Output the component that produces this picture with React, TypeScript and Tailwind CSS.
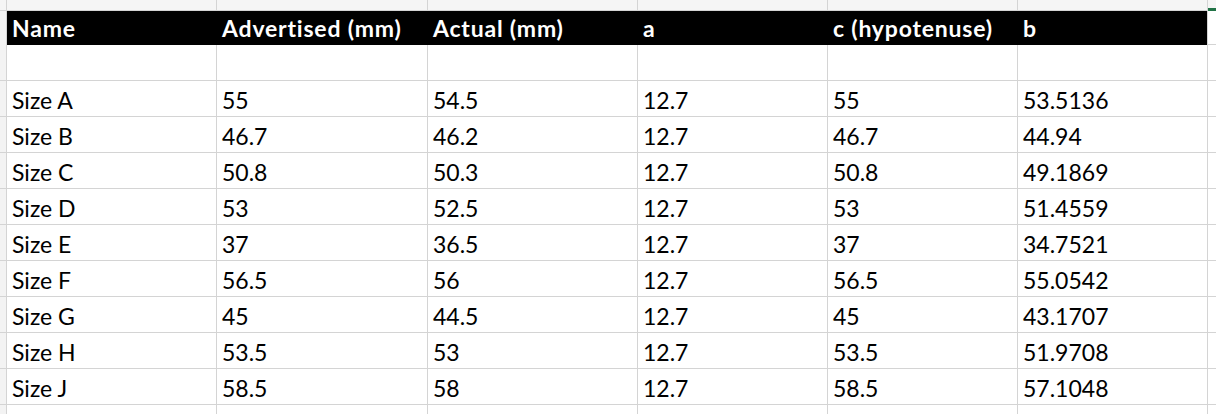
const cols = ["w-[7px]", "w-[210px]", "w-[211px]", "w-[210px]", "w-[190px]", "w-[190px]", "w-[190px]", "flex-1"];

const headers = ["Name", "Advertised (mm)", "Actual (mm)", "a", "c (hypotenuse)", "b"];

const rows = [
  ["Size A", "55", "54.5", "12.7", "55", "53.5136"],
  ["Size B", "46.7", "46.2", "12.7", "46.7", "44.94"],
  ["Size C", "50.8", "50.3", "12.7", "50.8", "49.1869"],
  ["Size D", "53", "52.5", "12.7", "53", "51.4559"],
  ["Size E", "37", "36.5", "12.7", "37", "34.7521"],
  ["Size F", "56.5", "56", "12.7", "56.5", "55.0542"],
  ["Size G", "45", "44.5", "12.7", "45", "43.1707"],
  ["Size H", "53.5", "53", "12.7", "53.5", "51.9708"],
  ["Size J", "58.5", "58", "12.7", "58.5", "57.1048"],
];

function Row({ cells, h }: { cells: string[]; h: string }) {
  return (
    <div className={`flex ${h}`}>
      <div className={`${cols[0]} shrink-0 bg-[#f3f3f3] border-r border-b border-[#d4d4d4]`} />
      {cells.map((c, i) => (
        <div
          key={i}
          className={`${cols[i + 1]} shrink-0 border-r border-b border-[#d4d4d4] flex items-end pl-[5px] pb-[4px] text-[23px] leading-none text-black`}
        >
          {c}
        </div>
      ))}
      <div className={`${cols[7]} border-b border-[#d4d4d4]`} />
    </div>
  );
}

export default function App() {
  return (
    <div className="w-[1216px] h-[414px] overflow-hidden bg-white font-['Lato',sans-serif]">
      {/* column header strip */}
      <div className="flex h-[11px] bg-[#f5f5f5]">
        {cols.slice(0, 7).map((w, i) => (
          <div key={i} className={`${w} shrink-0 border-r border-b border-[#d4d4d4]`} />
        ))}
        <div className="flex-1 relative border-b border-[#d4d4d4]">
          <div className="absolute left-0 right-0 top-[8px] h-[3px] bg-[#217346]" />
        </div>
      </div>

      {/* header */}
      <div className="flex h-[34px]">
        <div className={`${cols[0]} shrink-0 bg-[#f3f3f3] border-r border-[#d4d4d4]`} />
        <div className="w-[1200px] shrink-0 flex bg-black">
          {headers.map((t, i) => (
            <div
              key={i}
              className={`${cols[i + 1]} shrink-0 flex items-center pl-[5px] pt-[1px] text-[23px] font-bold tracking-[0.8px] text-white leading-none`}
            >
              {t}
            </div>
          ))}
        </div>
        <div className="flex-1 border-l border-b border-[#d4d4d4]" />
      </div>

      <Row cells={["", "", "", "", "", ""]} h="h-[36px]" />
      {rows.map((r, i) => (
        <Row key={i} cells={r} h="h-[36px]" />
      ))}
      <Row cells={["", "", "", "", "", ""]} h="h-[36px]" />
    </div>
  );
}
